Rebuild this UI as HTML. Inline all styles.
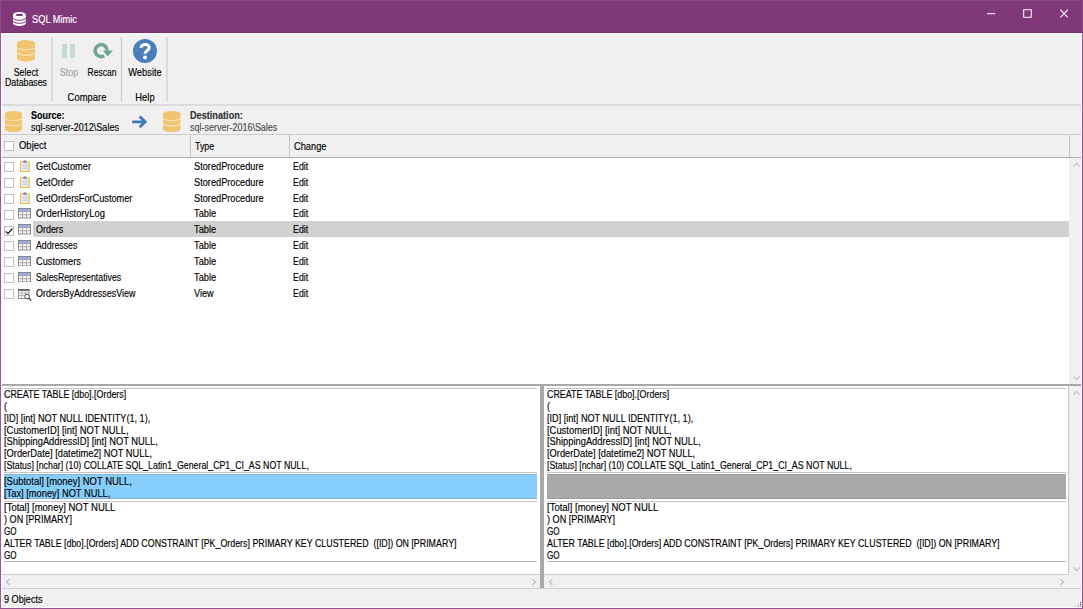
<!DOCTYPE html>
<html><head><meta charset="utf-8"><title>SQL Mimic</title>
<style>
html,body{margin:0;padding:0;background:#f0f0f0;}
body{width:1083px;height:609px;overflow:hidden;position:relative;font-family:"Liberation Sans",sans-serif;color:#000;}
.r{position:absolute;display:block;}
.t{-webkit-text-stroke:0.15px currentColor;position:absolute;white-space:nowrap;transform-origin:0 0;line-height:normal;color:#000;}
.cb{position:absolute;width:8px;height:8px;border:1px solid #bfbfbf;background:#fff;}
</style></head><body>

<div class="r" style="left:0px;top:0px;width:1083px;height:33px;background:#81387b;"></div>
<div class="r" style="left:1px;top:33px;width:1081px;height:1px;background:#fcfcfc;"></div>
<div class="r" style="left:1px;top:34px;width:1081px;height:1px;background:#f6f6f6;"></div>
<svg class="r" style="left:12.8px;top:11.6px" width="12.8" height="14" viewBox="0 0 12.8 14">
<path d="M0,2.8 A6.4,2.8 0 0 1 12.8,2.8 V11.2 A6.4,2.8 0 0 1 0,11.2 Z" fill="#fff"/>
<ellipse cx="6.4" cy="2.9" rx="3.7" ry="1.1" fill="#81387b"/>
<path d="M0,5.9 A6.4,2.4 0 0 0 12.8,5.9" fill="none" stroke="#81387b" stroke-width="1"/>
<path d="M0,8.9 A6.4,2.4 0 0 0 12.8,8.9" fill="none" stroke="#81387b" stroke-width="1"/>
</svg>
<div class="t" style="left:32px;top:13.00px;font-size:10.6px;transform:scaleX(0.8749);color:#fff;">SQL Mimic</div>
<svg class="r" style="left:980px;top:4px" width="96" height="20" viewBox="0 0 96 20">
<path d="M7,9.6H15.2" stroke="#e6d6e5" stroke-width="1.3"/>
<rect x="43.6" y="5.6" width="7.8" height="7.8" fill="none" stroke="#e6d6e5" stroke-width="1.3" rx="0.6"/>
<path d="M80.4,5.8 L87.8,13.4 M87.8,5.8 L80.4,13.4" stroke="#efe3ee" stroke-width="1.25"/>
</svg>
<svg class="r" style="left:17px;top:40px" width="18" height="21.5" viewBox="0 0 18 21.5">
<path d="M0,3.0100000000000002 A9.0,3.0100000000000002 0 0 1 18,3.0100000000000002 V18.49 A9.0,3.0100000000000002 0 0 1 0,18.49 Z" fill="#f1c56f"/>
<path d="M0,8.23 Q9.0,11.63 18,8.23" fill="none" stroke="#f9e7be" stroke-width="1.1"/>
<path d="M0,13.56 Q9.0,16.96 18,13.56" fill="none" stroke="#f9e7be" stroke-width="1.1"/>
</svg>
<div class="t" style="left:-74px;top:66.00px;width:200px;text-align:center;font-size:10.6px;transform:scaleX(0.8316);transform-origin:50% 0;">Select</div>
<div class="t" style="left:-74px;top:76.00px;width:200px;text-align:center;font-size:10.6px;transform:scaleX(0.8288);transform-origin:50% 0;">Databases</div>
<svg class="r" style="left:0;top:33px" width="200" height="72" viewBox="0 33 200 72"><path d="M51.9,37V101.5M121.5,37V101.5M166.9,37V101.5" stroke="#cdcdcd" stroke-width="1.3" fill="none"/></svg>
<div class="r" style="left:62.4px;top:44px;width:5px;height:14px;background:#c3dbd3;"></div>
<div class="r" style="left:70.4px;top:44px;width:5px;height:14px;background:#c3dbd3;"></div>
<div class="t" style="left:-31.200000000000003px;top:66.00px;width:200px;text-align:center;font-size:10.6px;transform:scaleX(0.853);transform-origin:50% 0;color:#a3a3a3;">Stop</div>
<svg class="r" style="left:92px;top:41px" width="23" height="20" viewBox="0 0 23 20">
<path d="M16.9,9.8 A7.75,7.75 0 1 0 13.03,16.31 L11.28,13.28 A4.25,4.25 0 1 1 13.4,9.8 Z" fill="#70a793"/>
<path d="M10.8,9.6 H21 L15.8,15.3 Z" fill="#70a793"/>
</svg>
<div class="t" style="left:1.9000000000000057px;top:66.00px;width:200px;text-align:center;font-size:10.6px;transform:scaleX(0.8041);transform-origin:50% 0;">Rescan</div>
<div class="t" style="left:-13px;top:91.00px;width:200px;text-align:center;font-size:10.6px;transform:scaleX(0.89);transform-origin:50% 0;">Compare</div>
<svg class="r" style="left:133px;top:38.5px" width="24" height="24" viewBox="0 0 24 24">
<circle cx="12" cy="12" r="12" fill="#4a7ebb"/>
<path d="M8,8.8 C8,4.6 16.2,4.4 16.2,8.6 C16.2,11.6 12,11.4 12,14.8" fill="none" stroke="#fff" stroke-width="3.1"/>
<circle cx="12" cy="18.6" r="2" fill="#fff"/>
</svg>
<div class="t" style="left:45.19999999999999px;top:66.00px;width:200px;text-align:center;font-size:10.6px;transform:scaleX(0.8819);transform-origin:50% 0;">Website</div>
<div class="t" style="left:45.19999999999999px;top:91.00px;width:200px;text-align:center;font-size:10.6px;transform:scaleX(0.8853);transform-origin:50% 0;">Help</div>
<div class="r" style="left:1px;top:104px;width:1081px;height:1.5px;background:#dcdcdc;"></div>
<svg class="r" style="left:5px;top:111px" width="17" height="21" viewBox="0 0 17 21">
<path d="M0,2.9400000000000004 A8.5,2.9400000000000004 0 0 1 17,2.9400000000000004 V18.06 A8.5,2.9400000000000004 0 0 1 0,18.06 Z" fill="#f1c56f"/>
<path d="M0,8.00 Q8.5,11.40 17,8.00" fill="none" stroke="#f9e7be" stroke-width="1.1"/>
<path d="M0,13.21 Q8.5,16.61 17,13.21" fill="none" stroke="#f9e7be" stroke-width="1.1"/>
</svg>
<div class="t" style="left:31px;top:109.00px;font-size:10.6px;transform:scaleX(0.8463);font-weight:bold;">Source:</div>
<div class="t" style="left:31px;top:121.00px;font-size:10.6px;transform:scaleX(0.8535);">sql-server-2012\Sales</div>
<svg class="r" style="left:131px;top:115px" width="17" height="14" viewBox="0 0 17 14">
<path d="M1.2,6.8 H13.6 M8.6,1.4 L14.2,6.8 L8.6,12.2" fill="none" stroke="#3d79ba" stroke-width="2.8" stroke-linejoin="miter"/>
</svg>
<svg class="r" style="left:163px;top:111px" width="17.5" height="21" viewBox="0 0 17.5 21">
<path d="M0,2.9400000000000004 A8.75,2.9400000000000004 0 0 1 17.5,2.9400000000000004 V18.06 A8.75,2.9400000000000004 0 0 1 0,18.06 Z" fill="#f1c56f"/>
<path d="M0,8.00 Q8.75,11.40 17.5,8.00" fill="none" stroke="#f9e7be" stroke-width="1.1"/>
<path d="M0,13.21 Q8.75,16.61 17.5,13.21" fill="none" stroke="#f9e7be" stroke-width="1.1"/>
</svg>
<div class="t" style="left:190px;top:109.00px;font-size:10.6px;transform:scaleX(0.8637);color:#333;font-weight:bold;">Destination:</div>
<div class="t" style="left:190px;top:121.00px;font-size:10.6px;transform:scaleX(0.8477);color:#4a4a4a;">sql-server-2016\Sales</div>
<div class="r" style="left:1px;top:134px;width:1081px;height:1px;background:#cdcdcd;"></div>
<div class="r" style="left:1px;top:157px;width:1081px;height:1.2px;background:#adadad;"></div>
<div class="r" style="left:190.0px;top:135px;width:1.2px;height:22px;background:#c4c4c4;"></div>
<div class="r" style="left:289.0px;top:135px;width:1.2px;height:22px;background:#c4c4c4;"></div>
<div class="r" style="left:1068.5px;top:135px;width:1.2px;height:22px;background:#c4c4c4;"></div>
<div class="cb" style="left:4px;top:141.2px"></div>
<div class="t" style="left:19.2px;top:139.00px;font-size:10.6px;transform:scaleX(0.8944);">Object</div>
<div class="t" style="left:194.5px;top:140.00px;font-size:10.6px;transform:scaleX(0.8311);">Type</div>
<div class="t" style="left:293.7px;top:140.00px;font-size:10.6px;transform:scaleX(0.8752);">Change</div>
<div class="r" style="left:1px;top:158.2px;width:1068px;height:225.8px;background:#fff;"></div>
<div class="r" style="left:1069px;top:158.2px;width:13px;height:225.8px;background:#f0f0f0;"></div>
<svg class="r" style="left:1072px;top:161px" width="10" height="8" viewBox="0 0 10 8"><path d="M1.6,5.6 L4.6,2.4 L7.6,5.6" fill="none" stroke="#bcbcbc" stroke-width="1.1"/></svg>
<svg class="r" style="left:1072px;top:373.5px" width="10" height="8" viewBox="0 0 10 8"><path d="M1.6,2.4 L4.6,5.6 L7.6,2.4" fill="none" stroke="#bcbcbc" stroke-width="1.1"/></svg>
<div class="cb" style="left:4px;top:162.0px"></div>
<svg class="r" style="left:19.8px;top:160.0px" width="10" height="12.4" viewBox="0 0 10 12.4">
<rect x="0" y="1.6" width="9.7" height="10.6" rx="0.5" fill="#f0b244"/>
<rect x="1.3" y="2.2" width="7.1" height="8.7" fill="#fff"/>
<rect x="2.1" y="3.3" width="5.5" height="6.8" fill="#dce9f8"/>
<path d="M2.1,4.9H7.6M2.1,6.7H7.6M2.1,8.5H7.6" stroke="#b9d2ee" stroke-width="0.8"/>
<path d="M2.4,2.7 L3.3,1.1 H6.4 L7.3,2.7 Z" fill="#8e8e8e"/>
<circle cx="4.85" cy="0.9" r="0.75" fill="none" stroke="#777" stroke-width="0.6"/>
</svg>
<div class="t" style="left:36px;top:160.00px;font-size:10.6px;transform:scaleX(0.8726);">GetCustomer</div>
<div class="t" style="left:194.1px;top:160.00px;font-size:10.6px;transform:scaleX(0.8697);">StoredProcedure</div>
<div class="t" style="left:293.4px;top:160.00px;font-size:10.6px;transform:scaleX(0.8321);">Edit</div>
<div class="cb" style="left:4px;top:177.875px"></div>
<svg class="r" style="left:19.8px;top:175.875px" width="10" height="12.4" viewBox="0 0 10 12.4">
<rect x="0" y="1.6" width="9.7" height="10.6" rx="0.5" fill="#f0b244"/>
<rect x="1.3" y="2.2" width="7.1" height="8.7" fill="#fff"/>
<rect x="2.1" y="3.3" width="5.5" height="6.8" fill="#dce9f8"/>
<path d="M2.1,4.9H7.6M2.1,6.7H7.6M2.1,8.5H7.6" stroke="#b9d2ee" stroke-width="0.8"/>
<path d="M2.4,2.7 L3.3,1.1 H6.4 L7.3,2.7 Z" fill="#8e8e8e"/>
<circle cx="4.85" cy="0.9" r="0.75" fill="none" stroke="#777" stroke-width="0.6"/>
</svg>
<div class="t" style="left:36px;top:176.00px;font-size:10.6px;transform:scaleX(0.8578);">GetOrder</div>
<div class="t" style="left:194.1px;top:176.00px;font-size:10.6px;transform:scaleX(0.8697);">StoredProcedure</div>
<div class="t" style="left:293.4px;top:176.00px;font-size:10.6px;transform:scaleX(0.8321);">Edit</div>
<div class="cb" style="left:4px;top:193.75px"></div>
<svg class="r" style="left:19.8px;top:191.75px" width="10" height="12.4" viewBox="0 0 10 12.4">
<rect x="0" y="1.6" width="9.7" height="10.6" rx="0.5" fill="#f0b244"/>
<rect x="1.3" y="2.2" width="7.1" height="8.7" fill="#fff"/>
<rect x="2.1" y="3.3" width="5.5" height="6.8" fill="#dce9f8"/>
<path d="M2.1,4.9H7.6M2.1,6.7H7.6M2.1,8.5H7.6" stroke="#b9d2ee" stroke-width="0.8"/>
<path d="M2.4,2.7 L3.3,1.1 H6.4 L7.3,2.7 Z" fill="#8e8e8e"/>
<circle cx="4.85" cy="0.9" r="0.75" fill="none" stroke="#777" stroke-width="0.6"/>
</svg>
<div class="t" style="left:36px;top:192.00px;font-size:10.6px;transform:scaleX(0.8659);">GetOrdersForCustomer</div>
<div class="t" style="left:194.1px;top:192.00px;font-size:10.6px;transform:scaleX(0.8697);">StoredProcedure</div>
<div class="t" style="left:293.4px;top:192.00px;font-size:10.6px;transform:scaleX(0.8321);">Edit</div>
<div class="cb" style="left:4px;top:209.625px"></div>
<svg class="r" style="left:18px;top:208.42499999999998px" width="13" height="10.4" viewBox="0 0 13 10.4">
<rect x="0.5" y="0.5" width="12" height="9.4" fill="#fff" stroke="#858585" stroke-width="1"/>
<rect x="1" y="1" width="11" height="2.3" fill="#8fb7e6"/>
<path d="M0.5,3.7H12.5M0.5,6.8H12.5" stroke="#939393" stroke-width="0.9"/>
<path d="M4.5,0.5V9.9M8.5,0.5V9.9" stroke="#a6a6a6" stroke-width="0.9"/>
</svg>
<div class="t" style="left:36px;top:207.00px;font-size:10.6px;transform:scaleX(0.8873);">OrderHistoryLog</div>
<div class="t" style="left:194.1px;top:207.00px;font-size:10.6px;transform:scaleX(0.876);">Table</div>
<div class="t" style="left:293.4px;top:207.00px;font-size:10.6px;transform:scaleX(0.8321);">Edit</div>
<div class="r" style="left:32.7px;top:221.2px;width:1036.3px;height:15.8px;background:#d1d1d1;"></div>
<div class="cb" style="left:4px;top:225.5px"></div><svg class="r" style="left:4px;top:225.5px" width="10" height="10" viewBox="0 0 10 10"><path d="M1.7,5.4 L3.9,7.7 L8.4,2.6" fill="none" stroke="#111" stroke-width="1.25"/></svg>
<svg class="r" style="left:18px;top:224.29999999999998px" width="13" height="10.4" viewBox="0 0 13 10.4">
<rect x="0.5" y="0.5" width="12" height="9.4" fill="#fff" stroke="#858585" stroke-width="1"/>
<rect x="1" y="1" width="11" height="2.3" fill="#8fb7e6"/>
<path d="M0.5,3.7H12.5M0.5,6.8H12.5" stroke="#939393" stroke-width="0.9"/>
<path d="M4.5,0.5V9.9M8.5,0.5V9.9" stroke="#a6a6a6" stroke-width="0.9"/>
</svg>
<div class="t" style="left:36px;top:223.00px;font-size:10.6px;transform:scaleX(0.8427);">Orders</div>
<div class="t" style="left:194.1px;top:223.00px;font-size:10.6px;transform:scaleX(0.876);">Table</div>
<div class="t" style="left:293.4px;top:223.00px;font-size:10.6px;transform:scaleX(0.8321);">Edit</div>
<div class="cb" style="left:4px;top:241.375px"></div>
<svg class="r" style="left:18px;top:240.17499999999998px" width="13" height="10.4" viewBox="0 0 13 10.4">
<rect x="0.5" y="0.5" width="12" height="9.4" fill="#fff" stroke="#858585" stroke-width="1"/>
<rect x="1" y="1" width="11" height="2.3" fill="#8fb7e6"/>
<path d="M0.5,3.7H12.5M0.5,6.8H12.5" stroke="#939393" stroke-width="0.9"/>
<path d="M4.5,0.5V9.9M8.5,0.5V9.9" stroke="#a6a6a6" stroke-width="0.9"/>
</svg>
<div class="t" style="left:36px;top:239.00px;font-size:10.6px;transform:scaleX(0.8246);">Addresses</div>
<div class="t" style="left:194.1px;top:239.00px;font-size:10.6px;transform:scaleX(0.876);">Table</div>
<div class="t" style="left:293.4px;top:239.00px;font-size:10.6px;transform:scaleX(0.8321);">Edit</div>
<div class="cb" style="left:4px;top:257.25px"></div>
<svg class="r" style="left:18px;top:256.05px" width="13" height="10.4" viewBox="0 0 13 10.4">
<rect x="0.5" y="0.5" width="12" height="9.4" fill="#fff" stroke="#858585" stroke-width="1"/>
<rect x="1" y="1" width="11" height="2.3" fill="#8fb7e6"/>
<path d="M0.5,3.7H12.5M0.5,6.8H12.5" stroke="#939393" stroke-width="0.9"/>
<path d="M4.5,0.5V9.9M8.5,0.5V9.9" stroke="#a6a6a6" stroke-width="0.9"/>
</svg>
<div class="t" style="left:36px;top:255.00px;font-size:10.6px;transform:scaleX(0.8762);">Customers</div>
<div class="t" style="left:194.1px;top:255.00px;font-size:10.6px;transform:scaleX(0.876);">Table</div>
<div class="t" style="left:293.4px;top:255.00px;font-size:10.6px;transform:scaleX(0.8321);">Edit</div>
<div class="cb" style="left:4px;top:273.125px"></div>
<svg class="r" style="left:18px;top:271.925px" width="13" height="10.4" viewBox="0 0 13 10.4">
<rect x="0.5" y="0.5" width="12" height="9.4" fill="#fff" stroke="#858585" stroke-width="1"/>
<rect x="1" y="1" width="11" height="2.3" fill="#8fb7e6"/>
<path d="M0.5,3.7H12.5M0.5,6.8H12.5" stroke="#939393" stroke-width="0.9"/>
<path d="M4.5,0.5V9.9M8.5,0.5V9.9" stroke="#a6a6a6" stroke-width="0.9"/>
</svg>
<div class="t" style="left:36px;top:271.00px;font-size:10.6px;transform:scaleX(0.8263);">SalesRepresentatives</div>
<div class="t" style="left:194.1px;top:271.00px;font-size:10.6px;transform:scaleX(0.876);">Table</div>
<div class="t" style="left:293.4px;top:271.00px;font-size:10.6px;transform:scaleX(0.8321);">Edit</div>
<div class="cb" style="left:4px;top:289.0px"></div>
<svg class="r" style="left:18px;top:288.8px" width="14" height="12" viewBox="0 0 14 12">
<rect x="0.5" y="0.5" width="10.5" height="9" fill="#fff" stroke="#8a8a8a" stroke-width="0.9"/>
<rect x="0.2" y="0.2" width="11.1" height="1.6" fill="#555"/>
<path d="M0.5,4H11M0.5,6.6H7" stroke="#9a9a9a" stroke-width="0.8"/>
<path d="M3.8,1.8V9.5M7.2,1.8V6" stroke="#aaa" stroke-width="0.8"/>
<circle cx="9" cy="7.6" r="2.3" fill="#fff" stroke="#555" stroke-width="1"/>
<path d="M10.7,9.3 L13.2,11.6" stroke="#444" stroke-width="1.4"/>
</svg>
<div class="t" style="left:36px;top:287.00px;font-size:10.6px;transform:scaleX(0.8467);">OrdersByAddressesView</div>
<div class="t" style="left:194.1px;top:287.00px;font-size:10.6px;transform:scaleX(0.8602);">View</div>
<div class="t" style="left:293.4px;top:287.00px;font-size:10.6px;transform:scaleX(0.8321);">Edit</div>
<div class="r" style="left:1px;top:384px;width:1081px;height:2px;background:#a9a9a9;"></div>
<div class="r" style="left:1px;top:386px;width:538.5px;height:188.5px;background:#fff;"></div>
<div class="r" style="left:543.5px;top:386px;width:525px;height:188.5px;background:#fff;"></div>
<div class="r" style="left:1068.5px;top:386px;width:13.5px;height:203px;background:#f0f0f0;"></div>
<div class="r" style="left:1068.3px;top:386px;width:1px;height:188.5px;background:#c6c6c6;"></div>
<svg class="r" style="left:1071.5px;top:388.5px" width="10" height="8" viewBox="0 0 10 8"><path d="M1.6,5.6 L4.6,2.4 L7.6,5.6" fill="none" stroke="#bcbcbc" stroke-width="1.1"/></svg>
<svg class="r" style="left:1071.5px;top:564.5px" width="10" height="8" viewBox="0 0 10 8"><path d="M1.6,2.4 L4.6,5.6 L7.6,2.4" fill="none" stroke="#bcbcbc" stroke-width="1.1"/></svg>
<div class="r" style="left:4px;top:388px;width:532.5px;height:1px;background:#c4c4c4;"></div>
<div class="r" style="left:4px;top:472px;width:532.5px;height:1px;background:#c4c4c4;"></div>
<div class="r" style="left:4px;top:501.3px;width:532.5px;height:1px;background:#c4c4c4;"></div>
<div class="r" style="left:4px;top:561.4px;width:532.5px;height:1px;background:#b4b4b4;"></div>
<div class="r" style="left:4px;top:474px;width:532.5px;height:25px;background:#87cefa;"></div>
<div class="r" style="left:4px;top:474px;width:532.5px;height:1px;background:#7fb4d6;"></div>
<div class="r" style="left:4px;top:498px;width:532.5px;height:1px;background:#7fb4d6;"></div>
<div class="t" style="left:4.3px;top:388.00px;font-size:10.6px;transform:scaleX(0.8405);">CREATE TABLE [dbo].[Orders]</div>
<div class="t" style="left:4.3px;top:400.00px;font-size:10.6px;transform:scaleX(0.878);">(</div>
<div class="t" style="left:4.3px;top:412.00px;font-size:10.6px;transform:scaleX(0.8595);">[ID] [int] NOT NULL IDENTITY(1, 1),</div>
<div class="t" style="left:4.3px;top:424.00px;font-size:10.6px;transform:scaleX(0.887);">[CustomerID] [int] NOT NULL,</div>
<div class="t" style="left:4.3px;top:435.00px;font-size:10.6px;transform:scaleX(0.8805);">[ShippingAddressID] [int] NOT NULL,</div>
<div class="t" style="left:4.3px;top:447.00px;font-size:10.6px;transform:scaleX(0.8781);">[OrderDate] [datetime2] NOT NULL,</div>
<div class="t" style="left:4.3px;top:459.00px;font-size:10.6px;transform:scaleX(0.8305);">[Status] [nchar] (10) COLLATE SQL_Latin1_General_CP1_CI_AS NOT NULL,</div>
<div class="t" style="left:4.3px;top:475.00px;font-size:10.6px;transform:scaleX(0.8916);">[Subtotal] [money] NOT NULL,</div>
<div class="t" style="left:4.3px;top:487.00px;font-size:10.6px;transform:scaleX(0.8782);">[Tax] [money] NOT NULL,</div>
<div class="t" style="left:4.3px;top:501.00px;font-size:10.6px;transform:scaleX(0.8976);">[Total] [money] NOT NULL</div>
<div class="t" style="left:4.3px;top:513.00px;font-size:10.6px;transform:scaleX(0.8586);">) ON [PRIMARY]</div>
<div class="t" style="left:4.3px;top:525.00px;font-size:10.6px;transform:scaleX(0.7641);">GO</div>
<div class="t" style="left:4.3px;top:537.00px;font-size:10.6px;transform:scaleX(0.8361);">ALTER TABLE [dbo].[Orders] ADD CONSTRAINT [PK_Orders] PRIMARY KEY CLUSTERED&nbsp; ([ID]) ON [PRIMARY]</div>
<div class="t" style="left:4.3px;top:549.00px;font-size:10.6px;transform:scaleX(0.7641);">GO</div>
<div class="r" style="left:546.5px;top:388px;width:519.0px;height:1px;background:#c4c4c4;"></div>
<div class="r" style="left:546.5px;top:472px;width:519.0px;height:1px;background:#c4c4c4;"></div>
<div class="r" style="left:546.5px;top:501.3px;width:519.0px;height:1px;background:#c4c4c4;"></div>
<div class="r" style="left:546.5px;top:561.4px;width:519.0px;height:1px;background:#b4b4b4;"></div>
<div class="r" style="left:546.5px;top:474px;width:519.0px;height:25px;background:#a9a9a9;"></div>
<div class="r" style="left:546.5px;top:474px;width:519.0px;height:1px;background:#9b9b9b;"></div>
<div class="r" style="left:546.5px;top:498px;width:519.0px;height:1px;background:#9b9b9b;"></div>
<div class="t" style="left:546.8px;top:388.00px;font-size:10.6px;transform:scaleX(0.8405);">CREATE TABLE [dbo].[Orders]</div>
<div class="t" style="left:546.8px;top:400.00px;font-size:10.6px;transform:scaleX(0.878);">(</div>
<div class="t" style="left:546.8px;top:412.00px;font-size:10.6px;transform:scaleX(0.8595);">[ID] [int] NOT NULL IDENTITY(1, 1),</div>
<div class="t" style="left:546.8px;top:424.00px;font-size:10.6px;transform:scaleX(0.887);">[CustomerID] [int] NOT NULL,</div>
<div class="t" style="left:546.8px;top:435.00px;font-size:10.6px;transform:scaleX(0.8805);">[ShippingAddressID] [int] NOT NULL,</div>
<div class="t" style="left:546.8px;top:447.00px;font-size:10.6px;transform:scaleX(0.8781);">[OrderDate] [datetime2] NOT NULL,</div>
<div class="t" style="left:546.8px;top:459.00px;font-size:10.6px;transform:scaleX(0.8305);">[Status] [nchar] (10) COLLATE SQL_Latin1_General_CP1_CI_AS NOT NULL,</div>
<div class="t" style="left:546.8px;top:501.00px;font-size:10.6px;transform:scaleX(0.8976);">[Total] [money] NOT NULL</div>
<div class="t" style="left:546.8px;top:513.00px;font-size:10.6px;transform:scaleX(0.8586);">) ON [PRIMARY]</div>
<div class="t" style="left:546.8px;top:525.00px;font-size:10.6px;transform:scaleX(0.7641);">GO</div>
<div class="t" style="left:546.8px;top:537.00px;font-size:10.6px;transform:scaleX(0.8361);">ALTER TABLE [dbo].[Orders] ADD CONSTRAINT [PK_Orders] PRIMARY KEY CLUSTERED&nbsp; ([ID]) ON [PRIMARY]</div>
<div class="t" style="left:546.8px;top:549.00px;font-size:10.6px;transform:scaleX(0.7641);">GO</div>
<div class="r" style="left:1px;top:574.4px;width:1068px;height:1px;background:#cacaca;"></div>
<div class="r" style="left:1px;top:575.4px;width:538.5px;height:13px;background:#f0f0f0;"></div>
<div class="r" style="left:543.5px;top:575.4px;width:525px;height:13px;background:#f0f0f0;"></div>
<div class="r" style="left:1px;top:588.3px;width:1081px;height:1px;background:#cfcfcf;"></div>
<div class="r" style="left:539.5px;top:386px;width:4px;height:202.4px;background:#a9a9a9;"></div>
<svg class="r" style="left:5px;top:578px" width="6" height="8" viewBox="0 0 6 8"><path d="M4.4,1.2 L1.6,4 L4.4,6.8" fill="none" stroke="#b9b9b9" stroke-width="1.1"/></svg>
<svg class="r" style="left:530.5px;top:578px" width="6" height="8" viewBox="0 0 6 8"><path d="M1.6,1.2 L4.4,4 L1.6,6.8" fill="none" stroke="#b9b9b9" stroke-width="1.1"/></svg>
<svg class="r" style="left:547.5px;top:578px" width="6" height="8" viewBox="0 0 6 8"><path d="M4.4,1.2 L1.6,4 L4.4,6.8" fill="none" stroke="#b9b9b9" stroke-width="1.1"/></svg>
<svg class="r" style="left:1059.3px;top:578px" width="6" height="8" viewBox="0 0 6 8"><path d="M1.6,1.2 L4.4,4 L1.6,6.8" fill="none" stroke="#b9b9b9" stroke-width="1.1"/></svg>
<div class="t" style="left:4px;top:593.00px;font-size:10.6px;transform:scaleX(0.8621);">9 Objects</div>
<svg class="r" style="left:1074px;top:600px" width="8" height="8" viewBox="0 0 8 8">
<g fill="#3a3a3a"><rect x="6" y="6.6" width="1.1" height="1.1"/><rect x="6" y="4.3" width="1.1" height="1.1"/><rect x="3.7" y="6.6" width="1.1" height="1.1"/><rect x="6" y="2" width="1.1" height="1.1"/><rect x="3.7" y="4.3" width="1.1" height="1.1" fill="#777"/><rect x="1.4" y="6.6" width="1.1" height="1.1" fill="#666"/></g></svg>
<div class="r" style="left:0px;top:32px;width:1083px;height:1px;background:#772e72;"></div>
<div class="r" style="left:1px;top:33px;width:1px;height:575px;background:#fafafa;"></div>
<div class="r" style="left:1081px;top:33px;width:1px;height:575px;background:#fafafa;"></div>
<div class="r" style="left:1px;top:607px;width:1081px;height:1px;background:#fafafa;"></div>
<div class="r" style="left:0px;top:0px;width:1083px;height:1px;background:#8b4887;"></div>
<div class="r" style="left:0px;top:0px;width:1px;height:33px;background:#8c4a88;"></div>
<div class="r" style="left:1082px;top:0px;width:1px;height:33px;background:#8c4a88;"></div>
<div class="r" style="left:0px;top:33px;width:1px;height:576px;background:#9a5a97;"></div>
<div class="r" style="left:1082px;top:33px;width:1px;height:576px;background:#9a5a97;"></div>
<div class="r" style="left:0px;top:608px;width:1083px;height:1px;background:#94508f;"></div>
</body></html>
